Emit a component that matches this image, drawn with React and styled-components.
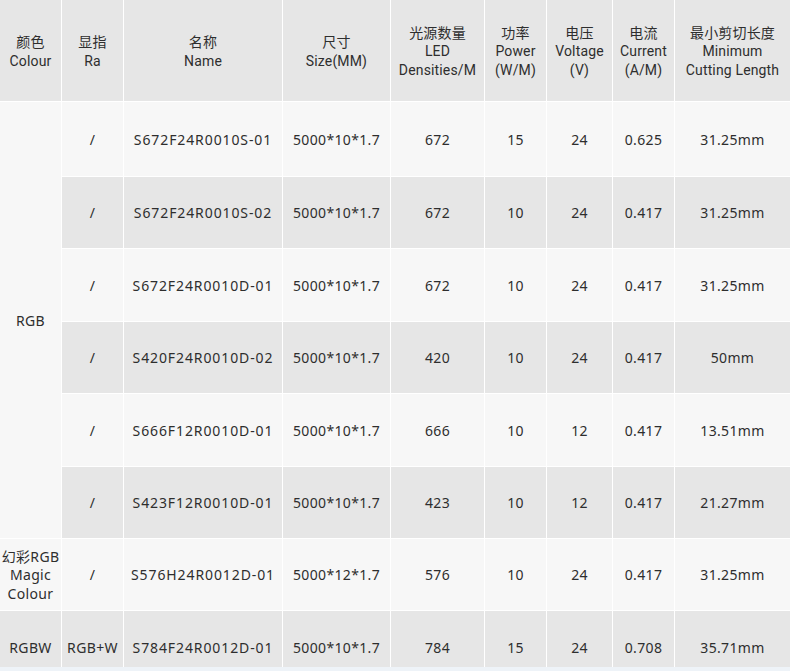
import React from "react";
import styled, { createGlobalStyle } from "styled-components";

const Global = createGlobalStyle`
  html, body { margin: 0; padding: 0; background: #eef3f8; }
  body { font-family: Roboto, "Noto Sans CJK SC", sans-serif; color: #2e2e2e; }
`;

const Frame = styled.div`
  width: 790px;
  height: 667px;
  overflow: hidden;
`;

const Grid = styled.div`
  display: grid;
  grid-template-columns: 61px 61px 158px 107px 93px 61px 65px 61px 1fr;
  grid-template-rows: 101px 74px repeat(7, 71.4px);
  gap: 1px;
  background: #ffffff;
`;

const Cell = styled.div`
  display: flex;
  align-items: center;
  justify-content: center;
  text-align: center;
  font-size: 14px;
  line-height: 18.5px;
  white-space: nowrap;
  background: ${(p) => (p.$shade ? "#e6e6e6" : "#f7f7f7")};
  grid-row: ${(p) => (p.$span ? `span ${p.$span}` : "auto")};
`;

const HeadCell = styled(Cell)`
  font-family: Roboto, "Noto Sans CJK SC", sans-serif;
  letter-spacing: 0.15px;
  padding-top: 2px;
`;

const BodyCell = styled(Cell)`
  font-family: "Noto Sans", "Noto Sans CJK SC", sans-serif;
  letter-spacing: ${(p) => (p.$code ? "0.9px" : "0.35px")};
  padding-top: 2px;
`;

const headers = [
  ["颜色", "Colour"],
  ["显指", "Ra"],
  ["名称", "Name"],
  ["尺寸", "Size(MM)"],
  ["光源数量", "LED", "Densities/M"],
  ["功率", "Power", "(W/M)"],
  ["电压", "Voltage", "(V)"],
  ["电流", "Current", "(A/M)"],
  ["最小剪切长度", "Minimum", "Cutting Length"],
];

const rows = [
  { colour: { lines: ["RGB"], span: 6 }, ra: "/", name: "S672F24R0010S-01", size: "5000*10*1.7", led: "672", p: "15", v: "24", a: "0.625", cut: "31.25mm" },
  { ra: "/", name: "S672F24R0010S-02", size: "5000*10*1.7", led: "672", p: "10", v: "24", a: "0.417", cut: "31.25mm" },
  { ra: "/", name: "S672F24R0010D-01", size: "5000*10*1.7", led: "672", p: "10", v: "24", a: "0.417", cut: "31.25mm" },
  { ra: "/", name: "S420F24R0010D-02", size: "5000*10*1.7", led: "420", p: "10", v: "24", a: "0.417", cut: "50mm" },
  { ra: "/", name: "S666F12R0010D-01", size: "5000*10*1.7", led: "666", p: "10", v: "12", a: "0.417", cut: "13.51mm" },
  { ra: "/", name: "S423F12R0010D-01", size: "5000*10*1.7", led: "423", p: "10", v: "12", a: "0.417", cut: "21.27mm" },
  { colour: { lines: ["幻彩RGB", "Magic", "Colour"] }, ra: "/", name: "S576H24R0012D-01", size: "5000*12*1.7", led: "576", p: "10", v: "24", a: "0.417", cut: "31.25mm" },
  { colour: { lines: ["RGBW"] }, ra: "RGB+W", name: "S784F24R0012D-01", size: "5000*10*1.7", led: "784", p: "15", v: "24", a: "0.708", cut: "35.71mm" },
];

const Lines = ({ lines }) =>
  lines.map((l, i) => (
    <React.Fragment key={i}>
      {i > 0 && <br />}
      {l}
    </React.Fragment>
  ));

export default function App() {
  return (
    <>
      <Global />
      <Frame>
        <Grid>
          {headers.map((h, i) => (
            <HeadCell key={"h" + i} $shade>
              <div>
                <Lines lines={h} />
              </div>
            </HeadCell>
          ))}
          {rows.map((r, i) => {
            const shade = i % 2 === 1;
            return (
              <React.Fragment key={"r" + i}>
                {r.colour && (
                  <BodyCell $shade={shade} $span={r.colour.span}>
                    <div>
                      <Lines lines={r.colour.lines} />
                    </div>
                  </BodyCell>
                )}
                <BodyCell $shade={shade}>{r.ra}</BodyCell>
                <BodyCell $shade={shade} $code>{r.name}</BodyCell>
                <BodyCell $shade={shade}>{r.size}</BodyCell>
                <BodyCell $shade={shade}>{r.led}</BodyCell>
                <BodyCell $shade={shade}>{r.p}</BodyCell>
                <BodyCell $shade={shade}>{r.v}</BodyCell>
                <BodyCell $shade={shade}>{r.a}</BodyCell>
                <BodyCell $shade={shade}>{r.cut}</BodyCell>
              </React.Fragment>
            );
          })}
        </Grid>
      </Frame>
    </>
  );
}
